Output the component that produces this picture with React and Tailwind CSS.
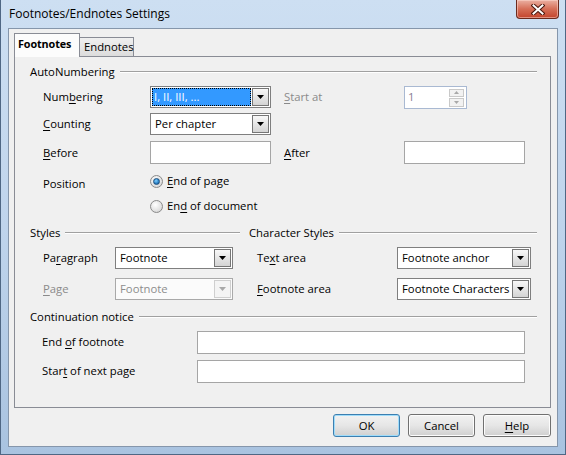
import React from "react";

function U({ children }) {
  return <span className="underline decoration-1 underline-offset-[2px]">{children}</span>;
}

function Arrow({ disabled }) {
  return (
    <div
      className={`w-[17px] h-[18px] shrink-0 flex items-center justify-center border ${
        disabled
          ? "border-[#cfcfcf] bg-[#f4f4f4]"
          : "border-[#767676] bg-linear-to-b from-[#f8f8f8] to-[#d4d4d4]"
      }`}
    >
      <svg width="7" height="4" viewBox="0 0 7 4">
        <path d="M0 0H7L3.5 4Z" fill={disabled ? "#a8a8a8" : "#000"} />
      </svg>
    </div>
  );
}

function Combo({ w, text, disabled, selected }) {
  return (
    <div
      className={`${w} h-[22px] flex items-center border p-[1px] ${
        disabled ? "border-[#a9a9a9] bg-[#fbfbfb]" : "border-[#7f7f7f] bg-white"
      }`}
    >
      <div className="flex-1 h-full min-w-0 flex items-center pr-[1px] overflow-hidden">
        {selected ? (
          <div className="w-full h-full bg-[#3399ff] border border-dotted border-black text-white flex items-center pl-[1px] leading-none">
            {text}
          </div>
        ) : (
          <span className={`pl-[3px] whitespace-nowrap ${disabled ? "text-[#8d8d8d]" : "text-black"}`}>
            {text}
          </span>
        )}
      </div>
      <Arrow disabled={disabled} />
    </div>
  );
}

function Input({ w }) {
  return <div className={`${w} h-[23px] border border-[#a5a5a5] bg-white`} />;
}

function Spin() {
  return (
    <div className="w-[63px] h-[23px] border border-[#a9b9d2] bg-white p-[1px] flex">
      <div className="flex-1 flex items-center pl-[2px] text-[#8a7d94]">1</div>
      <div className="w-[16px] flex flex-col gap-[1px] pt-[1px] pr-[1px]">
        <div className="flex-1 border border-[#c9c9c9] bg-[#f2f2f2] flex items-center justify-center">
          <svg width="5" height="3" viewBox="0 0 5 3">
            <path d="M0 3H5L2.5 0Z" fill="#a8a8a8" />
          </svg>
        </div>
        <div className="flex-1 border border-[#c9c9c9] bg-[#f2f2f2] flex items-center justify-center">
          <svg width="5" height="3" viewBox="0 0 5 3">
            <path d="M0 0H5L2.5 3Z" fill="#a8a8a8" />
          </svg>
        </div>
      </div>
    </div>
  );
}

function Radio({ checked, children }) {
  return (
    <div className="h-[20px] flex items-center">
      <div className="w-[13px] h-[13px] rounded-full border border-[#8a8a8a] bg-[radial-gradient(circle_at_40%_35%,#ffffff,#e2e2e2_60%,#c8c8c8)] flex items-center justify-center shrink-0">
        {checked && (
          <div className="w-[7px] h-[7px] rounded-full bg-[radial-gradient(circle_at_40%_35%,#7fd0ff,#2a7fc4_60%,#0d4a86)] border border-[#1d4f7d]" />
        )}
      </div>
      <span className="ml-[4px]">{children}</span>
    </div>
  );
}

function Heading({ children, className = "" }) {
  return (
    <div className={`h-[16px] flex items-center ${className}`}>
      <span className="whitespace-nowrap">{children}</span>
      <div className="flex-1 ml-[5px] h-[2px] border-t border-[#a0a0a0] border-b border-b-white" />
    </div>
  );
}

function Btn({ w, children, def }) {
  return (
    <div
      className={`${w} h-[23px] rounded-[3px] border flex items-center justify-center ${
        def
          ? "border-[#3c7fb1] shadow-[inset_0_0_0_1px_#9fdcfa] bg-linear-to-b from-[#f2f2f2] via-[#e6e6e6] to-[#d0d0d0]"
          : "border-[#707070] shadow-[inset_0_0_0_1px_#fcfcfc] bg-linear-to-b from-[#f2f2f2] via-[#e6e6e6] to-[#cfcfcf]"
      }`}
    >
      {children}
    </div>
  );
}

export default function App() {
  return (
    <div className="w-[566px] h-[455px] flex flex-col overflow-hidden text-[11.3px] leading-[16px] text-black font-['Open_Sans',sans-serif] bg-linear-to-b from-[#cddff2] via-[#bfd4ec] to-[#a9c3e0] border-x border-b border-[#4f6784]">
      {/* title bar */}
      <div className="h-[28px] flex justify-between shrink-0">
        <div className="pl-[8px] flex items-center text-[12px]">Footnotes/Endnotes Settings</div>
        <div className="w-[43px] h-[19px] mr-[6px] rounded-b-[4px] border border-t-0 border-[#6b2a1d] bg-linear-to-b from-[#eab0a2] via-[#d56e57] to-[#c3432b] flex items-center justify-center shadow-[inset_0_0_0_1px_rgba(255,220,210,0.5)]">
          <svg width="14" height="11" viewBox="0 0 14 11">
            <path d="M2.5 1.5L11.5 9.5M11.5 1.5L2.5 9.5" stroke="#4a160c" strokeWidth="4" strokeLinecap="square" />
            <path d="M2.5 1.5L11.5 9.5M11.5 1.5L2.5 9.5" stroke="#ffffff" strokeWidth="2" strokeLinecap="square" />
          </svg>
        </div>
      </div>

      {/* client area */}
      <div className="mx-[7px] h-[419px] bg-[#f0f0f0] border border-[#8596ab] flex flex-col shrink-0">
        {/* tabs */}
        <div className="h-[27px] pt-[4px] pl-[5px] flex items-end shrink-0">
          <div className="relative z-10 w-[66px] h-[24px] -mb-px border border-b-0 border-[#898c95] bg-[#fcfcfc] font-bold flex items-start pt-[2px] pl-[3px] text-[10.8px] tracking-[-0.1px]">
            Footnotes
          </div>
          <div className="w-[55px] h-[19px] -ml-px border border-b-0 border-[#898c95] bg-linear-to-b from-[#f0f0f0] to-[#dcdcdc] flex items-center pl-[4px]">
            Endnotes
          </div>
        </div>

        {/* panel */}
        <div className="ml-[5px] w-[537px] h-[352px] border border-[#898c95] bg-[#f0f0f0] flex flex-col pl-[15px] pr-[13px] shrink-0">
          <Heading className="mt-[7px]">AutoNumbering</Heading>

          <div className="mt-[6px] h-[22px] flex items-center pl-[13px]">
            <div className="w-[107px]">
              Num<U>b</U>ering
            </div>
            <Combo w="w-[121px]" text="I, II, III, ..." selected />
            <div className="ml-[13px] w-[120px] text-[#8a8a8a]">
              <U>S</U>tart at
            </div>
            <Spin />
          </div>

          <div className="mt-[5px] h-[22px] flex items-center pl-[13px]">
            <div className="w-[107px]">
              <U>C</U>ounting
            </div>
            <Combo w="w-[121px]" text="Per chapter" />
          </div>

          <div className="mt-[6px] h-[23px] flex items-center pl-[13px]">
            <div className="w-[107px]">
              <U>B</U>efore
            </div>
            <Input w="w-[121px]" />
            <div className="ml-[13px] w-[120px]">
              <U>A</U>fter
            </div>
            <Input w="w-[121px]" />
          </div>

          <div className="mt-[7px] flex pl-[13px]">
            <div className="w-[107px] mt-[5px] h-[16px]">Position</div>
            <div className="flex flex-col gap-[5px]">
              <Radio checked>
                <U>E</U>nd of page
              </Radio>
              <Radio>
                En<U>d</U> of document
              </Radio>
            </div>
          </div>

          <div className="mt-[9px] flex gap-[9px]">
            <div className="w-[210px] flex flex-col">
              <Heading>Styles</Heading>
              <div className="mt-[6px] h-[22px] flex items-center pl-[13px]">
                <div className="w-[72px]">
                  Pa<U>r</U>agraph
                </div>
                <Combo w="w-[118px]" text="Footnote" />
              </div>
              <div className="mt-[9px] h-[22px] flex items-center pl-[13px]">
                <div className="w-[72px] text-[#8a8a8a]">
                  <U>P</U>age
                </div>
                <Combo w="w-[118px]" text="Footnote" disabled />
              </div>
            </div>
            <div className="flex-1 flex flex-col">
              <Heading>Character Styles</Heading>
              <div className="mt-[6px] h-[22px] flex items-center pl-[8px]">
                <div className="w-[140px]">
                  Te<U>x</U>t area
                </div>
                <Combo w="w-[134px]" text="Footnote anchor" />
              </div>
              <div className="mt-[9px] h-[22px] flex items-center pl-[8px]">
                <div className="w-[140px]">
                  <U>F</U>ootnote area
                </div>
                <Combo w="w-[134px]" text="Footnote Characters" />
              </div>
            </div>
          </div>

          <Heading className="mt-[9px]">Continuation notice</Heading>

          <div className="mt-[6px] h-[22px] flex items-center pl-[12px]">
            <div className="w-[155px]">
              End <U>o</U>f footnote
            </div>
            <Input w="w-[328px]" />
          </div>
          <div className="mt-[7px] h-[22px] flex items-center pl-[12px]">
            <div className="w-[155px]">
              Star<U>t</U> of next page
            </div>
            <Input w="w-[328px]" />
          </div>
        </div>

        {/* buttons */}
        <div className="mt-[6px] flex justify-end gap-[8px] pr-[6px]">
          <Btn w="w-[67px]" def>
            OK
          </Btn>
          <Btn w="w-[67px]">Cancel</Btn>
          <Btn w="w-[68px]">
            <U>H</U>elp
          </Btn>
        </div>
      </div>
    </div>
  );
}
